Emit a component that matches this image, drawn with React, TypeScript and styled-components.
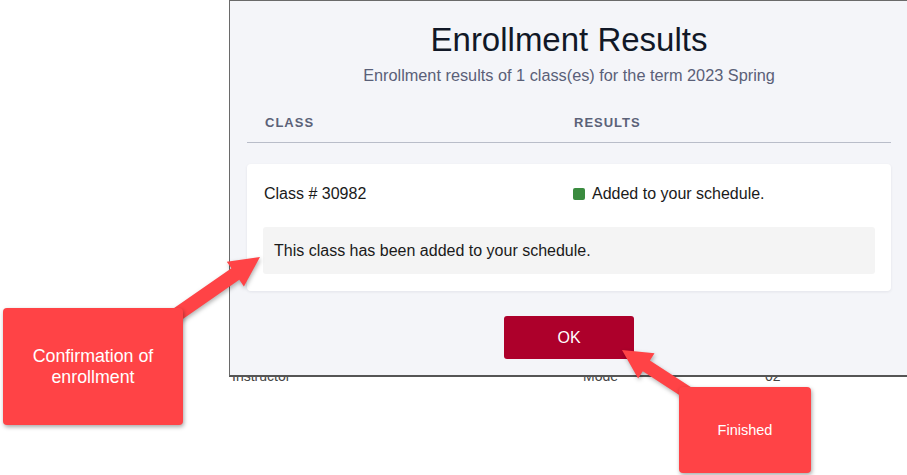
import React from 'react';
import styled, { createGlobalStyle } from 'styled-components';

const GlobalStyle = createGlobalStyle`
  html, body {
    margin: 0;
    padding: 0;
    background: #ffffff;
    font-family: "Liberation Sans", Arial, sans-serif;
  }
`;

const Stage = styled.div`
  position: relative;
  width: 907px;
  height: 475px;
  overflow: hidden;
  background: #ffffff;
`;

/* page behind the modal, mostly hidden */
const BackTable = styled.div`
  padding: 366px 0 0 232px;
`;

const BackRow = styled.div`
  display: grid;
  grid-template-columns: 351px 182px 100px;
  font-size: 14px;
  line-height: 20px;
  color: #444;
`;

const Modal = styled.div`
  position: absolute;
  left: 229px;
  top: 0;
  width: 680px;
  height: 377px;
  box-sizing: border-box;
  border: 1px solid #6a6a6a;
  border-bottom: 2px solid #555;
  background: #f4f5f9;
  padding: 19px 17px 0;
  display: flex;
  flex-direction: column;
`;

const Title = styled.h1`
  margin: 0;
  font-size: 33px;
  line-height: 40px;
  font-weight: 400;
  color: #111827;
  text-align: center;
`;

const Subtitle = styled.p`
  margin: 5px 0 0;
  font-size: 16.3px;
  line-height: 20px;
  color: #5a6078;
  text-align: center;
`;

const Columns = styled.div`
  display: grid;
  grid-template-columns: 309px 1fr;
  align-items: center;
`;

const HeaderRow = styled(Columns)`
  margin-top: 29px;
  padding: 0 0 10px 18px;
  border-bottom: 1px solid #b9bdc9;
`;

const HeadCell = styled.span`
  font-size: 13px;
  line-height: 18px;
  font-weight: 600;
  letter-spacing: 1px;
  text-transform: uppercase;
  color: #5b6278;
`;

const Card = styled.div`
  margin-top: 21px;
  background: #ffffff;
  border-radius: 4px;
  box-shadow: 0 1px 3px rgba(20, 30, 60, 0.08);
  padding: 16px 16px 17px;
  display: flex;
  flex-direction: column;
  gap: 19px;
`;

const CardRow = styled(Columns)`
  padding-left: 1px;
  font-size: 16px;
  line-height: 28px;
  color: #1a1a1a;
`;

const Status = styled.span`
  display: flex;
  align-items: center;
  gap: 7px;
`;

const StatusDot = styled.span<{ $color: string }>`
  width: 12px;
  height: 12px;
  border-radius: 2px;
  background: ${(p) => p.$color};
`;

const Message = styled.div`
  background: #f4f4f4;
  border-radius: 3px;
  padding: 14px 11px;
  font-size: 16px;
  line-height: 19px;
  color: #1a1a1a;
`;

const Footer = styled.div`
  display: flex;
  justify-content: center;
  margin-top: 25px;
`;

const OkButton = styled.button`
  width: 130px;
  height: 43px;
  border: none;
  border-radius: 3px;
  background: #ad002b;
  color: #ffffff;
  font-family: inherit;
  font-size: 16px;
`;

const Arrows = styled.svg`
  position: absolute;
  left: 0;
  top: 0;
  pointer-events: none;
  filter: drop-shadow(1px 2px 2px rgba(0, 0, 0, 0.3));
`;

const Callout = styled.div<{ $x: number; $y: number; $w: number; $h: number; $size: number }>`
  position: absolute;
  left: ${(p) => p.$x}px;
  top: ${(p) => p.$y}px;
  width: ${(p) => p.$w}px;
  height: ${(p) => p.$h}px;
  background: #ff4346;
  border-radius: 4px;
  box-shadow: 1px 2px 4px rgba(0, 0, 0, 0.35);
  display: flex;
  align-items: center;
  justify-content: center;
  text-align: center;
  color: #ffffff;
  font-size: ${(p) => p.$size}px;
  line-height: 21px;
`;

const arrowPoints = (
  tail: [number, number],
  tip: [number, number],
  shaft: number,
  headLen: number,
  headHalf: number
) => {
  const dx = tip[0] - tail[0];
  const dy = tip[1] - tail[1];
  const len = Math.hypot(dx, dy);
  const ux = dx / len;
  const uy = dy / len;
  const px = -uy;
  const py = ux;
  const bx = tip[0] - ux * headLen;
  const by = tip[1] - uy * headLen;
  const pts = [
    [tail[0] + px * shaft, tail[1] + py * shaft],
    [bx + px * shaft, by + py * shaft],
    [bx + px * headHalf, by + py * headHalf],
    tip,
    [bx - px * headHalf, by - py * headHalf],
    [bx - px * shaft, by - py * shaft],
    [tail[0] - px * shaft, tail[1] - py * shaft],
  ];
  return pts.map((p) => `${p[0].toFixed(1)},${p[1].toFixed(1)}`).join(' ');
};

const App: React.FC = () => {
  return (
    <Stage>
      <GlobalStyle />
      <BackTable>
        <BackRow>
          <span>Instructor</span>
          <span>Mode</span>
          <span>02</span>
        </BackRow>
      </BackTable>

      <Modal>
        <Title>Enrollment Results</Title>
        <Subtitle>Enrollment results of 1 class(es) for the term 2023 Spring</Subtitle>
        <HeaderRow>
          <HeadCell>Class</HeadCell>
          <HeadCell>Results</HeadCell>
        </HeaderRow>
        <Card>
          <CardRow>
            <span>Class # 30982</span>
            <Status>
              <StatusDot $color="#3a8b3f" />
              Added to your schedule.
            </Status>
          </CardRow>
          <Message>This class has been added to your schedule.</Message>
        </Card>
        <Footer>
          <OkButton>OK</OkButton>
        </Footer>
      </Modal>

      <Arrows width="907" height="475" viewBox="0 0 907 475">
        <polygon points={arrowPoints([172, 318], [260, 257], 7, 30, 15)} fill="#ff4346" />
        <polygon points={arrowPoints([705, 404], [622, 350], 6.5, 29, 15)} fill="#ff4346" />
      </Arrows>

      <Callout $x={3} $y={308} $w={180} $h={117} $size={17.8}>
        Confirmation of
        <br />
        enrollment
      </Callout>
      <Callout $x={679} $y={387} $w={132} $h={86} $size={14.5}>
        Finished
      </Callout>
    </Stage>
  );
};

export default App;
